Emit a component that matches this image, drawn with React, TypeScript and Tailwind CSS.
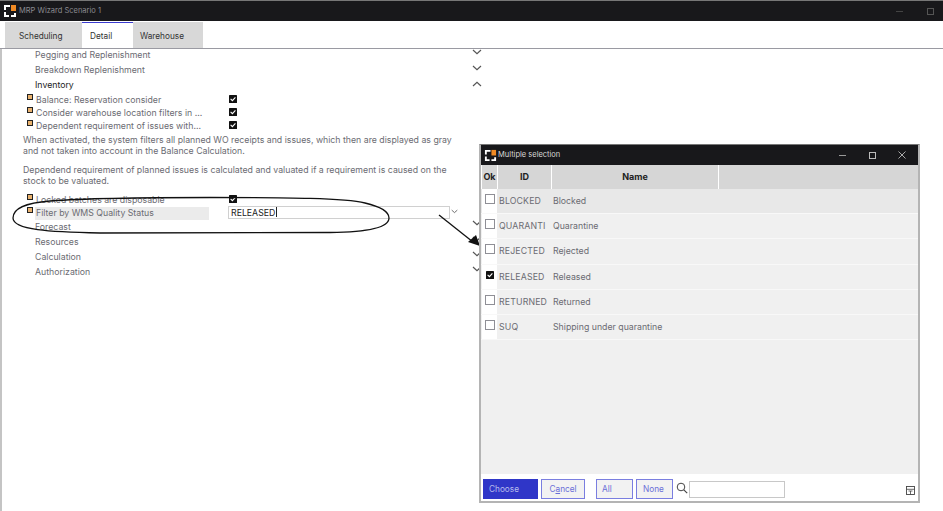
import React from "react";

const font = { fontFamily: "Inter, 'Liberation Sans', sans-serif" };

function Logo({ size = 14 }: { size?: number }) {
  return (
    <svg width={size} height={size} viewBox="0 0 14 14" className="shrink-0">
      <path d="M1 1H7V3H3V6H1Z M1 8H3V11H6V13H1Z M8 11H11V9H13V13H8Z" fill="#fff" />
      <rect x="8" y="1" width="5" height="6" fill="#f08a24" />
    </svg>
  );
}

function Chevron({ up = false, className = "" }: { up?: boolean; className?: string }) {
  return (
    <svg width="10" height="6" viewBox="0 0 10 6" className={className}>
      <path d={up ? "M1 5L5 1.4L9 5" : "M1 1L5 4.6L9 1"} fill="none" stroke="#555" strokeWidth="1.2" />
    </svg>
  );
}

function Check() {
  return (
    <svg width="8" height="8" viewBox="0 0 8 8" className="block shrink-0">
      <rect width="8" height="8" rx="0.6" fill="#111" />
      <path d="M1.6 3.8L3.4 5.6L6.4 2.4" fill="none" stroke="#fff" strokeWidth="1.1" />
    </svg>
  );
}

function Marker() {
  return <span className="block w-[6px] h-[6px] border border-[#222] bg-[#e9b26e] shrink-0" />;
}

function Section({
  label,
  up,
  dark,
  h = "h-[15px]",
  lh = "leading-[15px]",
  chev = "mt-[2px]",
}: {
  label: string;
  up?: boolean;
  dark?: boolean;
  h?: string;
  lh?: string;
  chev?: string;
}) {
  return (
    <div className={`flex items-start w-[480px] pl-[33px] ${h}`}>
      <span className={`flex-1 text-[8.75px] ${lh} ${dark ? "text-[#222]" : "text-[#6b6b72]"}`}>{label}</span>
      <Chevron up={up} className={chev} />
    </div>
  );
}

function Option({ label }: { label: string }) {
  return (
    <div className="flex items-start h-[13px] pl-[24.5px]">
      <span className="w-[9.5px]"><Marker /></span>
      <span className="w-[193px] text-[8.75px] leading-[13px] text-[#6b6b72]">{label}</span>
      <span className="pt-[1px]"><Check /></span>
    </div>
  );
}

const rows = [
  ["BLOCKED", "Blocked", false, "bg-[#e8e8e8]"],
  ["QUARANTI", "Quarantine", false, "bg-[#f0f0f0]"],
  ["REJECTED", "Rejected", false, "bg-[#f0f0f0]"],
  ["RELEASED", "Released", true, "bg-[#f0f0f0]"],
  ["RETURNED", "Returned", false, "bg-[#f0f0f0]"],
  ["SUQ", "Shipping under quarantine", false, "bg-[#f0f0f0]"],
] as const;

export default function App() {
  return (
    <div className="relative w-[943px] h-[511px] overflow-hidden bg-white" style={font}>
      {/* main title bar */}
      <div className="flex items-center h-[21px] bg-[#18181b] border-t border-[#777] pl-[3px] pr-[9px]">
        <Logo size={14} />
        <span className="ml-[2px] flex-1 text-[7.5px] text-[#8b8b90]">MRP Wizard Scenario 1</span>
        <span className="w-[7px] h-px bg-[#444] mr-[24px]" />
        <span className="w-[7px] h-[7px] border border-[#555]" />
      </div>

      {/* tabs */}
      <div className="flex h-[28px] pl-[5px] border-b border-[#9a9aa2]">
        <div className="mt-[1px] w-[77px] bg-[#d8d8d8] pl-[14px] text-[8.25px] leading-[28px] text-[#333]">Scheduling</div>
        <div className="mt-[1px] w-[51px] border-t border-[#3b3bd0] bg-white pl-[8px] text-[8.25px] leading-[27px] text-[#333]">Detail</div>
        <div className="mt-[1px] w-[70px] bg-[#d8d8d8] pl-[7px] text-[8.25px] leading-[28px] text-[#333]">Warehouse</div>
      </div>

      {/* body */}
      <div className="border-l-2 border-[#c4c4c4] h-[462px]">
        <Section label="Pegging and Replenishment" h="h-[14px]" lh="leading-[13px]" chev="mt-0" />
        <Section label="Breakdown Replenishment" chev="mt-[2px]" />
        <Section label="Inventory" up dark chev="mt-[3px]" />
        <div className="pt-[1px]">
          <Option label="Balance: Reservation consider" />
          <Option label="Consider warehouse location filters in ..." />
          <Option label="Dependent requirement of issues with..." />
        </div>
        <div className="pl-[21px] w-[465px] pt-[2px] text-[8.75px] leading-[11px] text-[#6b6b72]">
          <p>When activated, the system filters all planned WO receipts and issues, which then are displayed as gray and not taken into account in the Balance Calculation.</p>
          <p className="mt-[8px]">Dependend requirement of planned issues is calculated and valuated if a requirement is caused on the stock to be valuated.</p>
        </div>
        <div className="mt-[7px]">
          <Option label="Locked batches are disposable" />
        </div>
        <div className="flex items-start h-[13px] pl-[24.5px]">
          <span className="w-[8.5px]"><Marker /></span>
          <span className="w-[174px] h-[13px] bg-[#ebebeb] pl-[1px] text-[8.75px] leading-[12px] text-[#6b6b72]">Filter by WMS Quality Status</span>
          <span className="ml-[19px] w-[222px] h-[13px] -mt-[1px] border border-[#d0d0d0] pl-[2px] text-[8.75px] leading-[11px] text-[#222]">
            RELEASED<span className="inline-block w-px h-[10px] bg-[#222] ml-[1px] align-[-1px]" />
          </span>
          <Chevron className="ml-[1px] mt-[2px] w-[7px] h-[5px]" />
        </div>
        <Section label="Forecast" chev="mt-0" />
        <Section label="Resources" chev="mt-px" />
        <Section label="Calculation" chev="mt-px" />
        <Section label="Authorization" chev="mt-px" />
      </div>

      {/* annotation */}
      <svg className="absolute left-0 top-0 pointer-events-none" width="943" height="511" viewBox="0 0 943 511">
        <path
          d="M13 218C13 208 25 203 50 201C90 198 150 197.5 210 197.5C290 197.5 345 198 365 203C382 207 389 212 389 218C389 226 375 232 330 232.5L100 233C50 232 13 230 13 218Z"
          fill="none"
          stroke="#111"
          strokeWidth="1.3"
        />
        <path d="M439 215L473 242" stroke="#111" strokeWidth="1.3" />
        <path d="M480 246L468 242L476 235Z" fill="#111" />
      </svg>

      {/* dialog */}
      <div className="absolute left-[479px] top-[144px] w-[441px] h-[359px] flex flex-col border-2 border-[#b4b4b4] border-t-[#777] border-t bg-[#f0f0f0]">
        <div className="flex items-center h-[20px] bg-[#18181b] pl-[3px] pr-[12px]">
          <Logo size={13} />
          <span className="ml-[1px] flex-1 text-[7.5px] text-[#d8d8d8]">Multiple selection</span>
          <span className="w-[7px] h-px bg-[#999] mr-[23px]" />
          <span className="w-[7px] h-[7px] border border-[#bbb] mr-[22px]" />
          <svg width="8" height="8" viewBox="0 0 8 8"><path d="M0.5 0.5L7.5 7.5M7.5 0.5L0.5 7.5" stroke="#bbb" strokeWidth="0.9" /></svg>
        </div>
        <div className="flex h-[24px] bg-white gap-px text-[9px] font-bold leading-[23px] text-[#222] pl-[1px]">
          <div className="w-[15px] bg-[#d6d6d6] text-center">Ok</div>
          <div className="w-[53px] bg-[#d6d6d6] text-center">ID</div>
          <div className="w-[166px] bg-[#d6d6d6] text-center">Name</div>
          <div className="flex-1 bg-[#d6d6d6]" />
        </div>
        <div className="flex-1 flex flex-col">
          {rows.map(([id, name, checked, bg]) => (
            <div key={id} className={`flex h-[25.2px] border-b border-[#f8f8f8] pl-[1px] text-[8.75px] text-[#6b6b72] ${bg}`}>
              <div className="w-[15px] bg-white flex justify-center pt-[5px]">
                {checked ? (
                  <span className="pt-[1px]"><Check /></span>
                ) : (
                  <span className="block w-[10px] h-[10px] border border-[#8f8f96] bg-white" />
                )}
              </div>
              <div className="w-[54px] pl-[2px] leading-[24px] overflow-hidden whitespace-nowrap tracking-[0.15px]">{id}</div>
              <div className="flex-1 pl-[2px] leading-[24px]">{name}</div>
            </div>
          ))}
        </div>
        <div className="flex items-start h-[27px] bg-white pt-[5px] pl-[2px] pr-[2px] text-[8.25px]">
          <button className="w-[55px] h-[20px] bg-[#2f36c8] text-left pl-[6px] text-[#b8bcec]">Choose</button>
          <button className="ml-[3px] w-[44px] h-[20px] border border-[#7a7ee0] bg-[#f2f2f2] text-center text-[#6a6ed8]">C<span className="underline">a</span>ncel</button>
          <button className="ml-[11px] w-[37px] h-[20px] border border-[#7a7ee0] bg-[#f2f2f2] text-left pl-[5px] text-[#6a6ed8]">All</button>
          <button className="ml-[3px] w-[37px] h-[20px] border border-[#7a7ee0] bg-[#f2f2f2] text-left pl-[6px] text-[#6a6ed8]">None</button>
          <svg className="ml-[3px] mt-[3px]" width="12" height="12" viewBox="0 0 12 12">
            <circle cx="5" cy="5" r="3.8" fill="none" stroke="#444" strokeWidth="1" />
            <path d="M7.8 7.8L11.2 11.2" stroke="#444" strokeWidth="1.2" />
          </svg>
          <span className="ml-[1px] mt-[2px] w-[96px] h-[17px] border border-[#c8c8c8] bg-white" />
          <span className="flex-1" />
          <svg className="mr-[1px] mt-[7px]" width="9" height="9" viewBox="0 0 9 9">
            <rect x="0.5" y="0.5" width="8" height="8" fill="none" stroke="#444" strokeWidth="0.9" />
            <path d="M0.5 3.3H8.5M4.5 5V8.5M2.5 5H6.5" stroke="#444" strokeWidth="0.8" />
          </svg>
        </div>
      </div>
    </div>
  );
}
